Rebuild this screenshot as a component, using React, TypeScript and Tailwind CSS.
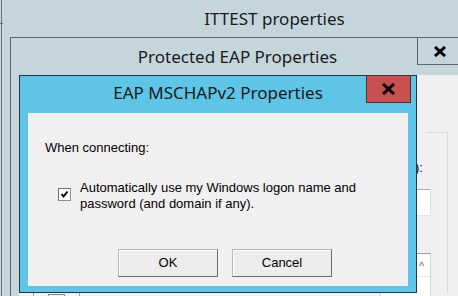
import React from "react";

const TITLE = "font-['Noto_Sans',sans-serif] text-[17px] leading-[23px] text-[#1a1a1a]";
const BODY = "font-['Liberation_Sans',Arial,sans-serif] text-[13px] leading-[16px] text-black";

function CloseX({ w, h }: { w: number; h: number }) {
  return (
    <svg width={w} height={h} viewBox={`0 0 ${w} ${h}`}>
      <path d={`M1 1 L${w - 1} ${h - 1} M${w - 1} 1 L1 ${h - 1}`} stroke="#000" strokeWidth="3" />
    </svg>
  );
}

function Button({ label }: { label: string }) {
  return (
    <button className="w-[100px] h-[28px] bg-[#ececec] border border-[#b3b3b3] border-r-[#6c6c6c] border-b-[#6c6c6c] shadow-[inset_1px_1px_0_#fff]">
      {label}
    </button>
  );
}

export default function App() {
  return (
    <div className="relative w-[458px] h-[296px] overflow-hidden bg-[#c5d5dc]">
      {/* ITTEST properties window */}
      <div className="absolute left-[1px] top-0 w-[546px] h-[296px] border-l border-[#66747c]">
        <div className="absolute left-[-2px] top-[23px] w-[3px] h-[1px] bg-[#66747c]" />
        <div className={`${TITLE} pt-[7px] text-center`}>ITTEST properties</div>
      </div>

      {/* Protected EAP Properties window (behind) */}
      <div className="absolute left-[10px] top-[37px] w-[455px] h-[300px] border border-[#56656e] flex flex-col">
        <div className={`${TITLE} relative h-[37px] shrink-0 pt-[7px] text-center`}>
          Protected EAP Properties
          <div className="absolute left-[406px] top-[-1px] w-[45px] h-[28px] border border-[#56656e] flex items-center justify-center">
            <CloseX w={12} h={11} />
          </div>
        </div>
        <div className={`${BODY} ml-[8px] flex-1 bg-[#f0f0f0] flex flex-col`}>
          <div className="h-[57px]" />
          <div className="ml-[407px] w-[22px] h-[161px] border-t border-r border-[#d9d9d9] flex flex-col">
            <div className="mt-[27px] ml-[-11px]">):</div>
            <div className="mt-[13px] ml-[-46px] w-[51px] h-[27px] shrink-0 bg-white border border-[#e3e3e3] border-t-[#abadb3]" />
            <div className="mt-[37px] ml-[-46px] w-[51px] h-[100px] shrink-0 bg-white border border-[#d4d4d4] border-t-[#9a9a9a] flex flex-col">
              <div className="pl-[38px] pt-[6px] h-[22px] text-[#606060] text-[11px] leading-[12px]">^</div>
              <div className="border-t border-[#e3e3e3]" />
            </div>
          </div>
          <div className="flex items-start gap-[14px] pl-[14px]">
            <div className="w-[1px] h-[10px] bg-[#9a9a9a]" />
            <div className="mt-[1px] w-[17px] h-[10px] border border-[#8a8a8a]" />
            <div className="w-[1px] h-[10px] bg-[#9a9a9a]" />
          </div>
        </div>
      </div>

      {/* EAP MSCHAPv2 Properties dialog */}
      <div className="absolute left-[19px] top-[75px] w-[398px] h-[218px] border border-[#22384a] bg-[#5ec5e7] flex flex-col">
        <div className={`${TITLE} relative h-[37px] shrink-0 pt-[5px] text-center`}>
          EAP MSCHAPv2 Properties
          <div className="absolute right-[5px] top-[-1px] w-[45px] h-[28px] bg-[#c75050] border border-[#4a2f33] flex items-center justify-center">
            <CloseX w={13} h={12} />
          </div>
        </div>
        <div className={`${BODY} mx-[8px] mb-[6px] flex-1 bg-[#f0f0f0] pt-[27px]`}>
          <div className="pl-[17px]">When connecting:</div>
          <div className="mt-[24px] pl-[30px] flex items-start">
            <div className="mt-[8px] w-[13px] h-[13px] shrink-0 bg-white border border-[#8f8f8f] border-t-[#707070] border-l-[#707070] flex items-center justify-center">
              <svg width="11" height="11" viewBox="0 0 11 11">
                <path d="M2.5 5 L4.5 7.5 L8.5 2.5" stroke="#000" strokeWidth="2" fill="none" />
              </svg>
            </div>
            <div className="ml-[9px]">
              Automatically use my Windows logon name and
              <br />
              password (and domain if any).
            </div>
          </div>
          <div className="mt-[37px] pl-[90px] flex gap-[14px]">
            <Button label="OK" />
            <Button label="Cancel" />
          </div>
        </div>
      </div>
    </div>
  );
}
